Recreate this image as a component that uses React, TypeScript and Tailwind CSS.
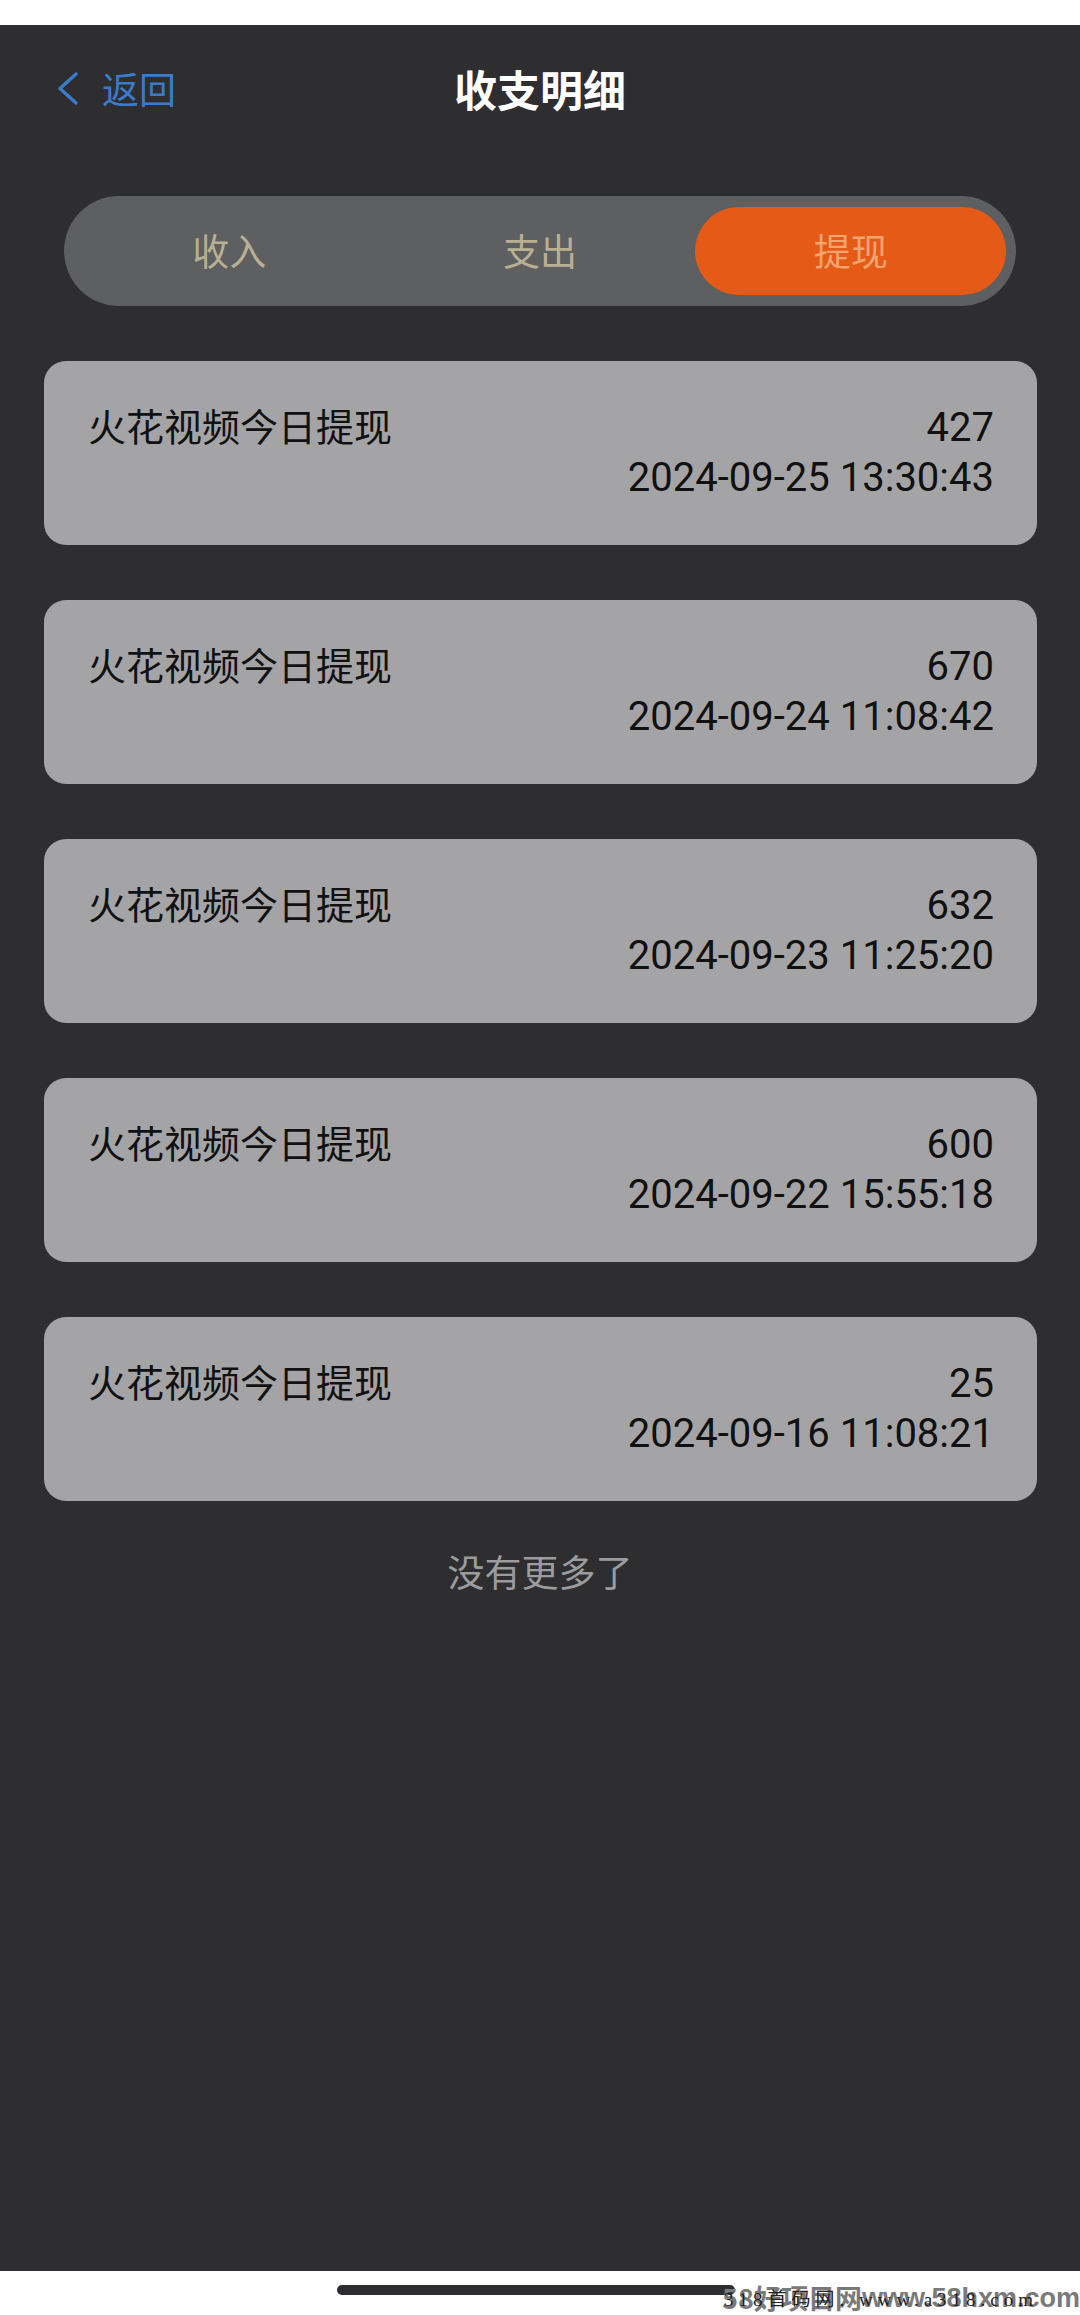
const records = [
  { amount: '427', time: '2024-09-25 13:30:43' },
  { amount: '670', time: '2024-09-24 11:08:42' },
  { amount: '632', time: '2024-09-23 11:25:20' },
  { amount: '600', time: '2024-09-22 15:55:18' },
  { amount: '25', time: '2024-09-16 11:08:21' },
]

const tabs = ['收入', '支出', '提现']

const cjk = "font-['Noto_Sans_CJK_SC',sans-serif]"

function BackButton() {
  return (
    <div className="flex items-center gap-[22px] pl-[56px]">
      <svg width="24" height="33" viewBox="0 0 24 33" fill="none">
        <polyline
          points="20,2 4,16.5 20,31"
          stroke="#3a7bcc"
          strokeWidth="3.4"
          strokeLinecap="round"
          strokeLinejoin="round"
        />
      </svg>
      <span className={`${cjk} text-[37px] leading-none text-[#3a7bcc]`}>返回</span>
    </div>
  )
}

function Tabs({ active }: { active: number }) {
  return (
    <div className="mx-[64px] mt-[45px] grid h-[110px] grid-cols-3 rounded-full bg-[#5e5f61] px-[10px] py-[11px]">
      {tabs.map((t, i) => (
        <div
          key={t}
          className={`${cjk} flex items-center justify-center rounded-full text-[37px] ${
            i === active ? 'bg-[#e65a18] text-[#f4a46e]' : 'text-[#b9af92]'
          }`}
        >
          {t}
        </div>
      ))}
    </div>
  )
}

function RecordCard({ amount, time }: { amount: string; time: string }) {
  return (
    <div className="flex h-[184px] items-start justify-between rounded-[22px] bg-[#a4a4a6] pl-[44px] pr-[43px] pt-[42px] text-[#111]">
      <span className={`${cjk} text-[38px] leading-[44px]`}>火花视频今日提现</span>
      <div className="flex flex-col items-end font-['Roboto',sans-serif] text-[40px] leading-[50px]">
        <span>{amount}</span>
        <span>{time}</span>
      </div>
    </div>
  )
}

export default function App() {
  return (
    <div className="flex h-[2315px] w-[1080px] flex-col overflow-hidden bg-white">
      <div className="h-[25px] shrink-0 bg-white" />
      <div className="flex flex-1 flex-col bg-[#2e2e30]">
        <div className="grid h-[126px] grid-cols-3 items-center">
          <BackButton />
          <span className={`${cjk} justify-self-center text-[43px] font-bold leading-none text-white`}>
            收支明细
          </span>
          <div />
        </div>
        <Tabs active={2} />
        <div className="ml-[44px] mr-[43px] mt-[55px] flex flex-col gap-[55px]">
          {records.map((r) => (
            <RecordCard key={r.time} amount={r.amount} time={r.time} />
          ))}
        </div>
        <p className={`${cjk} mt-[45px] text-center text-[37px] leading-[50px] text-[#9c9c9e]`}>没有更多了</p>
      </div>
      <div className="relative h-[44px] shrink-0 bg-white">
        <div className="absolute left-[337px] top-[14px] h-[10px] w-[398px] rounded-full bg-[#2e2e30]" />
        <div className="absolute right-0 top-[12px] flex items-center whitespace-nowrap text-[#7a7a7a]">
          <span className={`${cjk} text-[27px] font-bold leading-[30px]`}>58好项目网</span>
          <span className="font-['Liberation_Sans',sans-serif] text-[27px] font-bold leading-[30px]">
            www.58hxm.com
          </span>
        </div>
        <span className="absolute left-[724px] top-[18px] whitespace-nowrap font-['Liberation_Serif','Noto_Sans_CJK_SC',serif] text-[19px] leading-[22px] tracking-[5px] text-[#222]">
          318首码网. www.a318.com
        </span>
      </div>
    </div>
  )
}
